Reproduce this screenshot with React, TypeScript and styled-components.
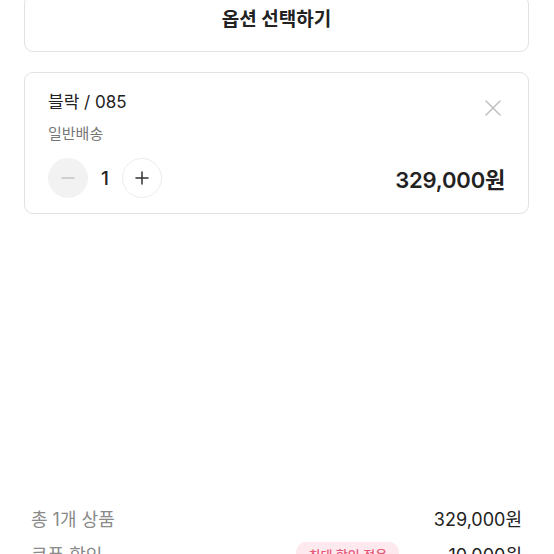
import styled, { createGlobalStyle } from 'styled-components'

const GlobalStyle = createGlobalStyle`
  html, body {
    margin: 0;
    padding: 0;
    background: #ffffff;
    font-family: Inter, "Noto Sans CJK KR", sans-serif;
    color: #222222;
    overflow: hidden;
  }
`

const App: React.FC = () => {
  return (
    <StyledPage>
      <GlobalStyle />
      <StyledOptionButton>옵션 선택하기</StyledOptionButton>

      <StyledOptionCard>
        <StyledCardHeader>
          <StyledOptionName>블락 / 085</StyledOptionName>
          <StyledClose aria-label="삭제">
            <svg width="18" height="18" viewBox="0 0 18 18">
              <path d="M2 2L16 16M16 2L2 16" stroke="#c2c2c2" strokeWidth="1.6" strokeLinecap="round" />
            </svg>
          </StyledClose>
        </StyledCardHeader>
        <StyledShipping>일반배송</StyledShipping>
        <StyledControlRow>
          <StyledStepper>
            <StyledRoundButton filled={true}>
              <svg width="16" height="16" viewBox="0 0 16 16">
                <path d="M2 8H14" stroke="#c4c4c4" strokeWidth="1.5" strokeLinecap="round" />
              </svg>
            </StyledRoundButton>
            <StyledCount>1</StyledCount>
            <StyledRoundButton filled={false}>
              <svg width="16" height="16" viewBox="0 0 16 16">
                <path d="M2 8H14M8 2V14" stroke="#333" strokeWidth="1.5" strokeLinecap="round" />
              </svg>
            </StyledRoundButton>
          </StyledStepper>
          <StyledPrice>329,000원</StyledPrice>
        </StyledControlRow>
      </StyledOptionCard>

      <StyledSummary>
        <StyledSummaryRow>
          <StyledLabel>총 1개 상품</StyledLabel>
          <StyledValue>329,000원</StyledValue>
        </StyledSummaryRow>
        <StyledSummaryRow>
          <StyledLabel>쿠폰 할인</StyledLabel>
          <StyledRight>
            <StyledBadge>최대 할인 적용</StyledBadge>
            <StyledValue>-10,000원</StyledValue>
          </StyledRight>
        </StyledSummaryRow>
      </StyledSummary>
    </StyledPage>
  )
}

export default App

const StyledPage = styled.div`
  width: 554px;
  height: 554px;
  overflow: hidden;
  box-sizing: border-box;
  padding: 0 25px 0 24px;
`

const StyledOptionButton = styled.button`
  display: flex;
  align-items: flex-start;
  justify-content: center;
  width: 100%;
  height: 57px;
  margin-top: -5px;
  padding: 5px 0 0;
  box-sizing: border-box;
  background: #fff;
  border: 1px solid #e2e2e2;
  border-radius: 9px;
  font-family: inherit;
  font-size: 19px;
  font-weight: 700;
  line-height: 38px;
  color: #222;
`

const StyledOptionCard = styled.div`
  margin-top: 20px;
  height: 142px;
  box-sizing: border-box;
  padding: 18px 23px 17px 23px;
  border: 1px solid #e2e2e2;
  border-radius: 9px;
  display: flex;
  flex-direction: column;
`

const StyledCardHeader = styled.div`
  display: flex;
  justify-content: space-between;
  align-items: flex-start;
  height: 22px;
`

const StyledOptionName = styled.div`
  font-size: 17px;
  line-height: 22px;
  color: #222;
`

const StyledClose = styled.button`
  margin-top: 8px;
  margin-right: 3px;
  padding: 0;
  border: none;
  background: none;
  display: flex;
`

const StyledShipping = styled.div`
  margin-top: 11px;
  font-size: 15px;
  line-height: 20px;
  color: #777;
`

const StyledControlRow = styled.div`
  margin-top: 14px;
  display: flex;
  align-items: center;
  justify-content: space-between;
  height: 40px;
`

const StyledStepper = styled.div`
  display: flex;
  align-items: center;
`

const StyledRoundButton = styled.button<{ filled: boolean }>`
  width: 40px;
  height: 40px;
  border-radius: 50%;
  padding: 0;
  display: flex;
  align-items: center;
  justify-content: center;
  background: ${({ filled }) => (filled ? '#f2f2f2' : '#fff')};
  border: 1px solid ${({ filled }) => (filled ? '#f2f2f2' : '#ececec')};
`

const StyledCount = styled.span`
  width: 34px;
  text-align: center;
  font-size: 19px;
  font-weight: 500;
  color: #222;
`

const StyledPrice = styled.div`
  font-size: 22px;
  font-weight: 600;
  color: #222;
  letter-spacing: -0.2px;
`

const StyledSummary = styled.div`
  margin-top: 290px;
  padding: 0 7px;
  display: flex;
  flex-direction: column;
  gap: 8px;
`

const StyledSummaryRow = styled.div`
  display: flex;
  align-items: center;
  justify-content: space-between;
  height: 28px;
`

const StyledLabel = styled.span`
  font-size: 18px;
  color: #8a8a8a;
`

const StyledValue = styled.span`
  font-size: 18px;
  color: #222;
`

const StyledRight = styled.div`
  display: flex;
  align-items: center;
  gap: 41px;
`

const StyledBadge = styled.span`
  display: inline-flex;
  align-items: center;
  height: 25px;
  padding: 0 12px;
  border-radius: 10px;
  background: #fde9ee;
  color: #e8587a;
  font-size: 13px;
  font-weight: 500;
`
